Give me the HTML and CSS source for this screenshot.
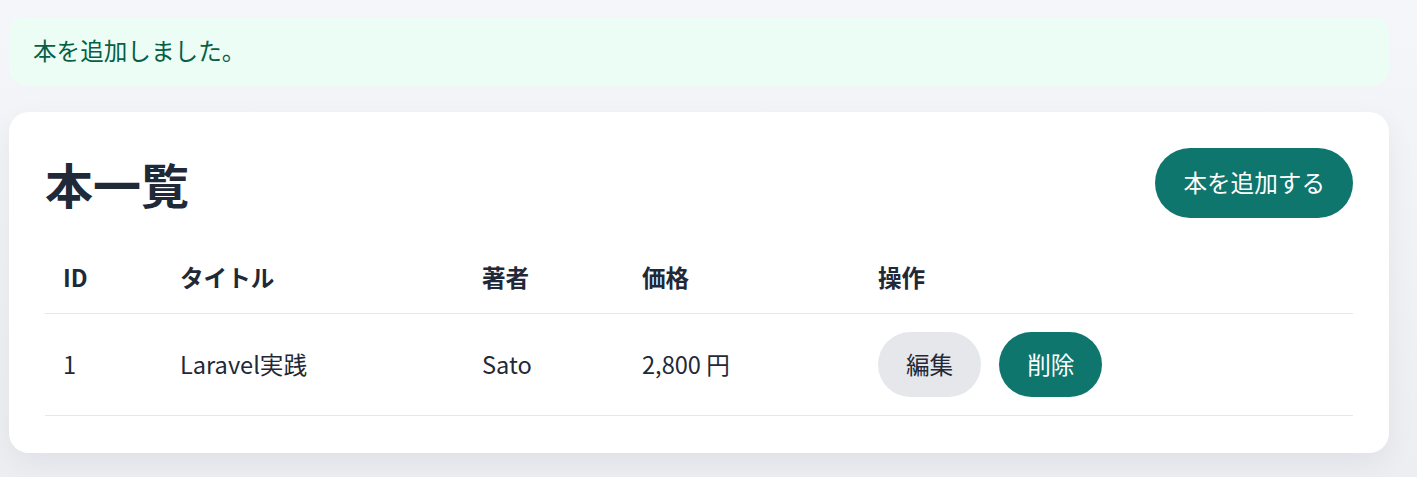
FILE: index.html
```html
<!DOCTYPE html>
<html lang="ja">
<head>
<meta charset="utf-8">
<title>本一覧</title>
<link rel="stylesheet" href="styles.css">
</head>
<body>
<div class="page">
  <div class="flash">本を追加しました。</div>
  <section class="card">
    <div class="card-head">
      <h1 class="title">本一覧</h1>
      <a class="btn btn-primary btn-lg" href="#">本を追加する</a>
    </div>
    <table class="books">
      <thead>
        <tr>
          <th class="c-id">ID</th>
          <th class="c-title">タイトル</th>
          <th class="c-author">著者</th>
          <th class="c-price">価格</th>
          <th class="c-ops">操作</th>
        </tr>
      </thead>
      <tbody>
        <tr>
          <td>1</td>
          <td>Laravel実践</td>
          <td>Sato</td>
          <td>2,800 円</td>
          <td>
            <div class="ops">
              <a class="btn btn-light" href="#">編集</a>
              <button class="btn btn-primary" type="button">削除</button>
            </div>
          </td>
        </tr>
      </tbody>
    </table>
  </section>
</div>
</body>
</html>
```
FILE: styles.css
```css
* { box-sizing: border-box; }
html, body { margin: 0; padding: 0; height: 100%; }
body {
  font-family: "Noto Sans CJK JP", "Noto Sans", sans-serif;
  font-size: 23.6px;
  line-height: 35px;
  color: #1f2937;
  background: linear-gradient(180deg, #f5f6f9 0%, #eceef2 100%);
}
.page {
  width: 1380px;
  margin-left: 9px;
  padding-top: 17px;
}
.flash {
  background: #ebfdf4;
  color: #065f46;
  border-radius: 16px;
  padding: 16px 24px 17px;
  margin-bottom: 27px;
}
.card {
  background: #ffffff;
  border-radius: 20px;
  padding: 36px 36px 37px;
  box-shadow: 0 10px 30px rgba(15, 23, 42, 0.06);
}
.card-head {
  display: flex;
  align-items: center;
  justify-content: space-between;
}
.title {
  margin: 0;
  font-size: 48px;
  line-height: 70px;
  font-weight: 700;
  color: #1f2937;
}
.btn {
  display: inline-block;
  border: 0;
  border-radius: 999px;
  font-family: inherit;
  font-size: 23.6px;
  line-height: 35px;
  padding: 15px 28px;
  text-decoration: none;
  cursor: pointer;
}
.btn-lg { padding: 17px 28px 18px; }
.btn-primary { background: #0f766e; color: #ffffff; }
.btn-light { background: #e5e7eb; color: #1f2937; }
.books {
  width: 100%;
  margin-top: 25px;
  border-collapse: collapse;
  table-layout: fixed;
}
.books th {
  text-align: left;
  font-weight: 700;
  color: #1f2937;
  padding: 17px 18px 18px;
  border-bottom: 1px solid #e5e7eb;
}
.books td {
  padding: 18px;
  border-bottom: 1px solid #e5e7eb;
  vertical-align: middle;
}
.c-id { width: 117px; }
.c-title { width: 302px; }
.c-author { width: 160px; }
.c-price { width: 236px; }
.ops { display: flex; gap: 18px; }
```
